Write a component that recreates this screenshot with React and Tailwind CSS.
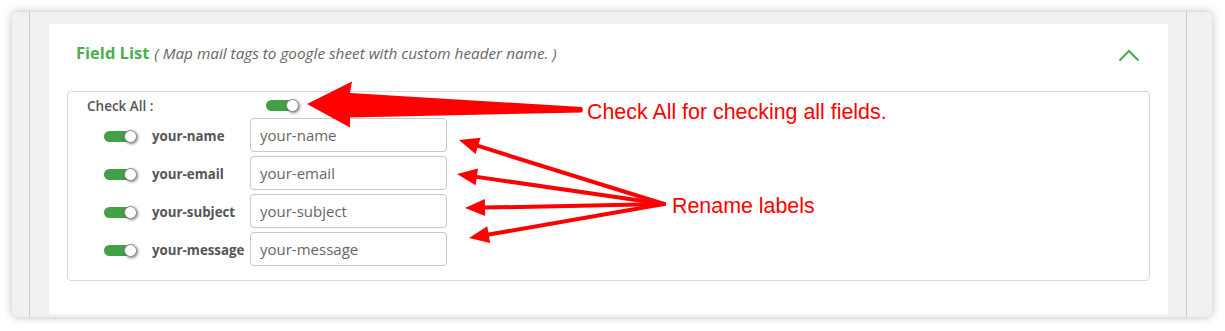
import React from 'react'

const fields = ['your-name', 'your-email', 'your-subject', 'your-message']

function Toggle(){
  return (
    <span className="relative inline-flex items-center w-[33px] h-[14px]">
      <span className="block w-[30px] h-[11px] rounded-full bg-[#43a047]" />
      <span className="absolute right-0 top-[0.5px] w-[13px] h-[13px] rounded-full bg-white border border-[#8a8a8a] shadow-[1px_1px_3px_rgba(0,0,0,0.5)]" />
    </span>
  )
}

function arrowHead(x1, y1, x2, y2, len, half){
  const dx = x2 - x1
  const dy = y2 - y1
  const d = Math.hypot(dx, dy)
  const ux = dx / d
  const uy = dy / d
  const bx = x2 - ux * len
  const by = y2 - uy * len
  const pts = [[x2, y2], [bx - uy * half, by + ux * half], [bx + uy * half, by - ux * half]]
  return { bx, by, pts: pts.map(p => p.join(',')).join(' ') }
}

function Annotations(){
  const tips = [[459, 140], [457, 174], [465, 208], [469, 238]]
  return (
    <svg className="absolute left-0 top-0 pointer-events-none" width="1225" height="331" viewBox="0 0 1225 331">
      <polygon
        points="307,104 352,81.5 350,93 582,107 583,110 582,112.5 350,117.5 350,127.5"
        fill="#ff0000"
      />
      {tips.map(([tx, ty], i) => {
        const h = arrowHead(664, 204, tx, ty, 20, 8.5)
        return (
          <g key={i}>
            <line x1="664" y1="204" x2={h.bx} y2={h.by} stroke="#ff0000" strokeWidth="4" strokeLinecap="round" />
            <polygon points={h.pts} fill="#ff0000" />
          </g>
        )
      })}
    </svg>
  )
}

export default function App(){
  return (
    <div className="relative w-[1225px] h-[331px] bg-white overflow-hidden font-['Open_Sans',sans-serif]">
      <div className="ml-[12px] mt-[12px] w-[1200px] h-[305px] rounded-[5px] bg-[#f1f1f1] shadow-[0_0_8px_rgba(0,0,0,0.28)] flex">
        <div className="w-[18px] border-r border-[#c9c9c9]" />
        <div className="w-[19px]" />
        <div className="w-[1119px] mt-[12px] mb-[3px] bg-white">
          {/* header */}
          <div className="flex items-center justify-between h-[57px] pl-[27px] pr-[28px]">
            <div className="flex items-baseline gap-[5px] pt-[2px]">
              <span className="text-[16.5px] font-bold text-[#4cae4f]">Field List</span>
              <span className="text-[15.3px] italic text-[#666]">( Map mail tags to google sheet with custom header name. )</span>
            </div>
            <svg width="22" height="14" viewBox="0 0 22 14" className="mb-[-6px]">
              <path d="M1.5 11.5 L11 2 L20.5 11.5" fill="none" stroke="#4cae4f" strokeWidth="2.2" />
            </svg>
          </div>
          {/* field list box */}
          <div className="mx-[18px] mt-[10px] h-[190px] border border-[#ddd5d9] rounded-[4px] pt-[6px] pl-[19px]">
            <div className="flex items-center h-[14px]">
              <span className="w-[179px] text-[13.5px] font-semibold text-[#555] pt-[2px]">Check All :</span>
              <Toggle />
            </div>
            <div className="mt-[6px] flex flex-col gap-[4px]">
              {fields.map(f => (
                <div key={f} className="flex items-center h-[34px]">
                  <span className="ml-[17px] w-[32px] pt-[2px]"><Toggle /></span>
                  <span className="ml-[16px] w-[98px] text-[13.3px] font-bold text-[#555] pt-[3px]">{f}</span>
                  <input
                    readOnly
                    placeholder={f}
                    className="w-[197px] h-[34px] rounded-[4px] border border-[#c8c8c8] px-[9px] text-[15px] text-[#444] placeholder:text-[#666] outline-none"
                  />
                </div>
              ))}
            </div>
          </div>
        </div>
        <div className="w-[19px] border-r border-[#c9c9c9]" />
        <div className="flex-1" />
      </div>
      <Annotations />
      <span className="absolute left-[587px] top-[98px] text-[21.4px] leading-[28px] text-[#ff0000] font-['Liberation_Sans',Arial,sans-serif]">Check All for checking all fields.</span>
      <span className="absolute left-[672px] top-[192px] text-[21.4px] leading-[28px] text-[#ff0000] font-['Liberation_Sans',Arial,sans-serif]">Rename labels</span>
    </div>
  )
}
